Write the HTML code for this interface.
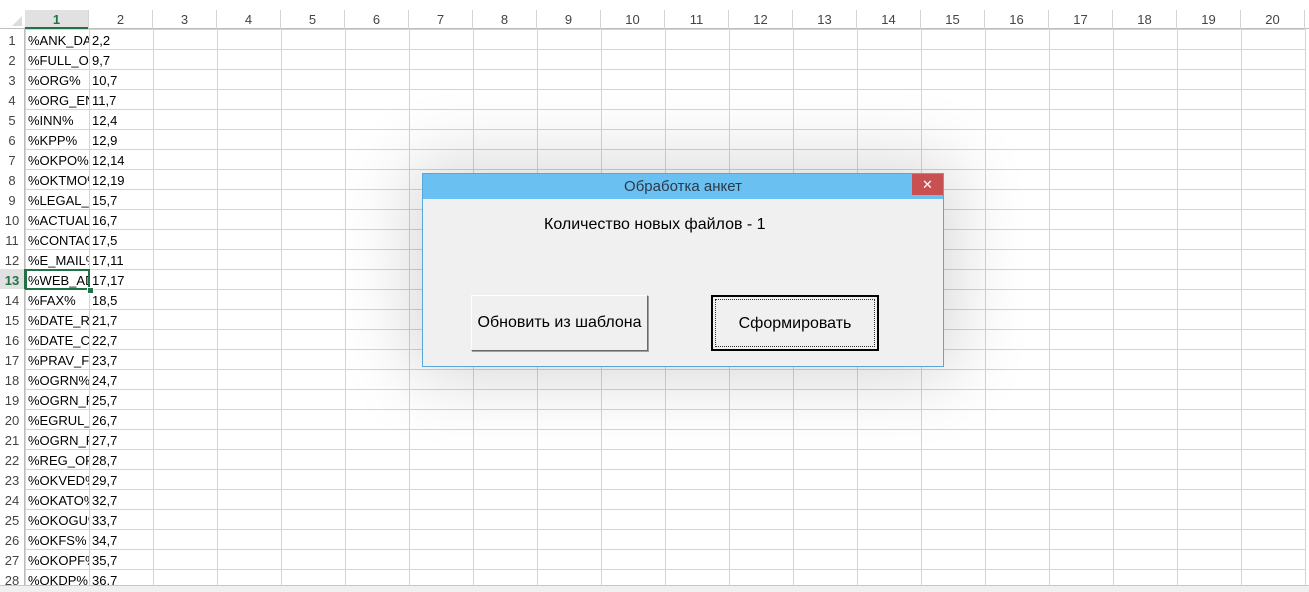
<!DOCTYPE html>
<html><head><meta charset="utf-8"><style>
body{margin:0;width:1309px;height:591px;overflow:hidden;background:#fff;font-family:"Liberation Sans","DejaVu Sans",sans-serif;position:relative}
.grid{position:absolute;left:25px;top:29px;width:1281px;height:556px;
background-image:linear-gradient(to right,#d4d4d4 1px,transparent 1px),linear-gradient(to bottom,#d4d4d4 1px,transparent 1px);
background-size:64px 20px;background-position:0 0}
.rh{position:absolute;left:0;width:24px;text-align:center;font-size:13px;color:#444;height:20px;line-height:21px}
.ch{position:absolute;top:10px;height:19px;line-height:19px;width:64px;text-align:center;font-size:13px;color:#444;border-right:1px solid #d4d4d4;box-sizing:border-box}
.c{position:absolute;height:20px;line-height:21px;font-size:13px;color:#000;white-space:nowrap;overflow:hidden;padding-left:3px;box-sizing:border-box}
.a{left:25px;width:64px}.b{left:89px;width:64px}
</style></head><body>
<div style="position:absolute;left:0;top:10px;width:1309px;height:19px;border-bottom:1px solid #bdbdbd;box-sizing:border-box"></div>
<div style="position:absolute;left:0;top:29px;width:25px;height:556px;border-right:1px solid #bdbdbd;box-sizing:border-box"></div>
<div style="position:absolute;left:12px;top:16px;width:0;height:0;border-left:10px solid transparent;border-bottom:10px solid #dcdcdc"></div>
<div class="grid"></div>
<div style="position:absolute;left:25px;top:10px;width:64px;height:19px;background:#e1e1e1;border-bottom:2px solid #217346;box-sizing:border-box"></div>
<div style="position:absolute;left:0;top:269px;width:24px;height:20px;background:#e1e1e1;border-right:2px solid #217346"></div>
<div class="ch" style="left:25px;color:#217346;font-weight:bold">1</div>
<div class="ch" style="left:89px">2</div><div class="ch" style="left:153px">3</div><div class="ch" style="left:217px">4</div><div class="ch" style="left:281px">5</div><div class="ch" style="left:345px">6</div><div class="ch" style="left:409px">7</div><div class="ch" style="left:473px">8</div><div class="ch" style="left:537px">9</div><div class="ch" style="left:601px">10</div><div class="ch" style="left:665px">11</div><div class="ch" style="left:729px">12</div><div class="ch" style="left:793px">13</div><div class="ch" style="left:857px">14</div><div class="ch" style="left:921px">15</div><div class="ch" style="left:985px">16</div><div class="ch" style="left:1049px">17</div><div class="ch" style="left:1113px">18</div><div class="ch" style="left:1177px">19</div><div class="ch" style="left:1241px">20</div>

<div class="rh" style="top:30px">1</div><div class="c a" style="top:30px">%ANK_DATE%</div><div class="c b" style="top:30px">2,2</div>
<div class="rh" style="top:50px">2</div><div class="c a" style="top:50px">%FULL_ORG%</div><div class="c b" style="top:50px">9,7</div>
<div class="rh" style="top:70px">3</div><div class="c a" style="top:70px">%ORG%</div><div class="c b" style="top:70px">10,7</div>
<div class="rh" style="top:90px">4</div><div class="c a" style="top:90px">%ORG_ENG%</div><div class="c b" style="top:90px">11,7</div>
<div class="rh" style="top:110px">5</div><div class="c a" style="top:110px">%INN%</div><div class="c b" style="top:110px">12,4</div>
<div class="rh" style="top:130px">6</div><div class="c a" style="top:130px">%KPP%</div><div class="c b" style="top:130px">12,9</div>
<div class="rh" style="top:150px">7</div><div class="c a" style="top:150px">%OKPO%</div><div class="c b" style="top:150px">12,14</div>
<div class="rh" style="top:170px">8</div><div class="c a" style="top:170px">%OKTMO%</div><div class="c b" style="top:170px">12,19</div>
<div class="rh" style="top:190px">9</div><div class="c a" style="top:190px">%LEGAL_ADR%</div><div class="c b" style="top:190px">15,7</div>
<div class="rh" style="top:210px">10</div><div class="c a" style="top:210px">%ACTUAL_ADR%</div><div class="c b" style="top:210px">16,7</div>
<div class="rh" style="top:230px">11</div><div class="c a" style="top:230px">%CONTACT%</div><div class="c b" style="top:230px">17,5</div>
<div class="rh" style="top:250px">12</div><div class="c a" style="top:250px">%E_MAIL%</div><div class="c b" style="top:250px">17,11</div>
<div class="rh" style="top:270px;color:#217346;font-weight:bold">13</div><div class="c a" style="top:270px">%WEB_ADR%</div><div class="c b" style="top:270px">17,17</div>
<div style="position:absolute;left:25px;top:269px;width:65px;height:21px;border:2px solid #217346;box-sizing:border-box"></div>
<div style="position:absolute;left:87px;top:287px;width:5px;height:5px;background:#217346;border:1px solid #fff"></div>
<div class="rh" style="top:290px">14</div><div class="c a" style="top:290px">%FAX%</div><div class="c b" style="top:290px">18,5</div>
<div class="rh" style="top:310px">15</div><div class="c a" style="top:310px">%DATE_REG%</div><div class="c b" style="top:310px">21,7</div>
<div class="rh" style="top:330px">16</div><div class="c a" style="top:330px">%DATE_CIT%</div><div class="c b" style="top:330px">22,7</div>
<div class="rh" style="top:350px">17</div><div class="c a" style="top:350px">%PRAV_FORM%</div><div class="c b" style="top:350px">23,7</div>
<div class="rh" style="top:370px">18</div><div class="c a" style="top:370px">%OGRN%</div><div class="c b" style="top:370px">24,7</div>
<div class="rh" style="top:390px">19</div><div class="c a" style="top:390px">%OGRN_REG%</div><div class="c b" style="top:390px">25,7</div>
<div class="rh" style="top:410px">20</div><div class="c a" style="top:410px">%EGRUL_DATE%</div><div class="c b" style="top:410px">26,7</div>
<div class="rh" style="top:430px">21</div><div class="c a" style="top:430px">%OGRN_R%</div><div class="c b" style="top:430px">27,7</div>
<div class="rh" style="top:450px">22</div><div class="c a" style="top:450px">%REG_ORG%</div><div class="c b" style="top:450px">28,7</div>
<div class="rh" style="top:470px">23</div><div class="c a" style="top:470px">%OKVED%</div><div class="c b" style="top:470px">29,7</div>
<div class="rh" style="top:490px">24</div><div class="c a" style="top:490px">%OKATO%</div><div class="c b" style="top:490px">32,7</div>
<div class="rh" style="top:510px">25</div><div class="c a" style="top:510px">%OKOGU%</div><div class="c b" style="top:510px">33,7</div>
<div class="rh" style="top:530px">26</div><div class="c a" style="top:530px">%OKFS%</div><div class="c b" style="top:530px">34,7</div>
<div class="rh" style="top:550px">27</div><div class="c a" style="top:550px">%OKOPF%</div><div class="c b" style="top:550px">35,7</div>
<div class="rh" style="top:570px">28</div><div class="c a" style="top:570px">%OKDP%</div><div class="c b" style="top:570px">36,7</div>

<div style="position:absolute;left:0;top:585px;width:1309px;height:6px;background:#f0f0f0;border-top:1px solid #c6c6c6"></div>

<div style="position:absolute;left:422px;top:173px;width:522px;height:194px;background:#f0f0f0;border:1px solid #5aa6d8;box-sizing:border-box;box-shadow:0 0 70px 10px rgba(0,0,0,0.16)">
  <div style="position:absolute;left:0;top:0;right:0;height:25px;background:#6ac0f1;text-align:center;line-height:25px;font-size:15px;color:#2b3a4a">Обработка анкет</div>
  <div style="position:absolute;left:489px;top:0;width:31px;height:21px;background:#c85050;color:#fff;text-align:center;line-height:21px;font-size:13px">✕</div>
  <div style="position:absolute;left:121px;top:42px;font-size:16px;color:#000">Количество новых файлов - 1</div>
  <div style="position:absolute;left:48px;top:121px;width:177px;height:56px;box-sizing:border-box;border:1px solid;border-color:#fff #6a6a6a #6a6a6a #fff;box-shadow:1px 1px 0 #a0a0a0;text-align:center;line-height:54px;font-size:16px;color:#000">Обновить из шаблона</div>
  <div style="position:absolute;left:288px;top:121px;width:168px;height:56px;box-sizing:border-box;border:2px solid #000;text-align:center;font-size:16px;color:#000">
    <div style="position:absolute;inset:2px;border:1px dotted #333;line-height:48px">Сформировать</div>
  </div>
</div>
</body></html>
